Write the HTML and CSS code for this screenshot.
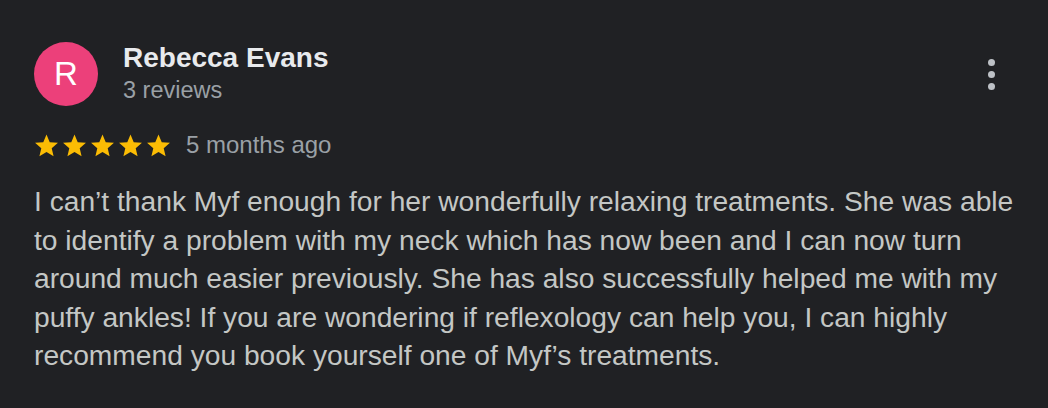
FILE: index.html
```html
<!DOCTYPE html>
<html>
<head>
<meta charset="utf-8">
<link rel="stylesheet" href="styles.css">
</head>
<body>
<div class="review">
  <div class="header">
    <div class="avatar">R</div>
    <div class="who">
      <div class="name">Rebecca Evans</div>
      <div class="count">3 reviews</div>
    </div>
    <div class="more" aria-label="More">
      <span class="dot"></span><span class="dot"></span><span class="dot"></span>
    </div>
  </div>
  <div class="meta">
    <div class="stars">
      <svg class="star" viewBox="0 0 24 24"><path d="M12 1.5l3.09 7.26 7.91.7-6 5.2 1.8 7.74L12 18.3l-6.8 4.1 1.8-7.74-6-5.2 7.91-.7z"/></svg>
      <svg class="star" viewBox="0 0 24 24"><path d="M12 1.5l3.09 7.26 7.91.7-6 5.2 1.8 7.74L12 18.3l-6.8 4.1 1.8-7.74-6-5.2 7.91-.7z"/></svg>
      <svg class="star" viewBox="0 0 24 24"><path d="M12 1.5l3.09 7.26 7.91.7-6 5.2 1.8 7.74L12 18.3l-6.8 4.1 1.8-7.74-6-5.2 7.91-.7z"/></svg>
      <svg class="star" viewBox="0 0 24 24"><path d="M12 1.5l3.09 7.26 7.91.7-6 5.2 1.8 7.74L12 18.3l-6.8 4.1 1.8-7.74-6-5.2 7.91-.7z"/></svg>
      <svg class="star" viewBox="0 0 24 24"><path d="M12 1.5l3.09 7.26 7.91.7-6 5.2 1.8 7.74L12 18.3l-6.8 4.1 1.8-7.74-6-5.2 7.91-.7z"/></svg>
    </div>
    <span class="time">5 months ago</span>
  </div>
  <p class="text">I can’t thank Myf enough for her wonderfully relaxing treatments. She was able to identify a problem with my neck which has now been and I can now turn around much easier previously. She has also successfully helped me with my puffy ankles! If you are wondering if reflexology can help you, I can highly recommend you book yourself one of Myf’s treatments.</p>
</div>
</body>
</html>
```

FILE: styles.css
```css
html, body {
  margin: 0;
  padding: 0;
  background: #202124;
  width: 1048px;
  height: 408px;
  overflow: hidden;
}
.review {
  font-family: "Liberation Sans", Arial, sans-serif;
  padding: 42px 14px 0 34px;
}
.header {
  display: flex;
  align-items: flex-start;
}
.avatar {
  width: 64px;
  height: 64px;
  border-radius: 50%;
  background: #ec407a;
  color: #ffffff;
  font-size: 33px;
  display: flex;
  align-items: center;
  justify-content: center;
  flex: none;
}
.who {
  margin-left: 25px;
  flex: 1;
}
.name {
  color: #e8eaed;
  font-size: 28px;
  font-weight: bold;
  line-height: 32px;
}
.count {
  color: #9aa0a6;
  font-size: 23.5px;
  line-height: 32px;
}
.more {
  display: flex;
  flex-direction: column;
  gap: 5px;
  margin-top: 16.5px;
  margin-right: 38.8px;
}
.dot {
  width: 7px;
  height: 7px;
  border-radius: 50%;
  background: #bdc1c6;
}
.meta {
  display: flex;
  align-items: center;
  margin-top: 25px;
}
.stars {
  display: flex;
  gap: 3px;
}
.star {
  width: 25px;
  height: 25px;
  fill: #fbbc04;
}
.time {
  color: #9aa0a6;
  font-size: 24px;
  margin-left: 15px;
}
.text {
  color: #c4c7c5;
  font-size: 28.2px;
  line-height: 38.5px;
  margin: 23px 0 0 0;
}
```
